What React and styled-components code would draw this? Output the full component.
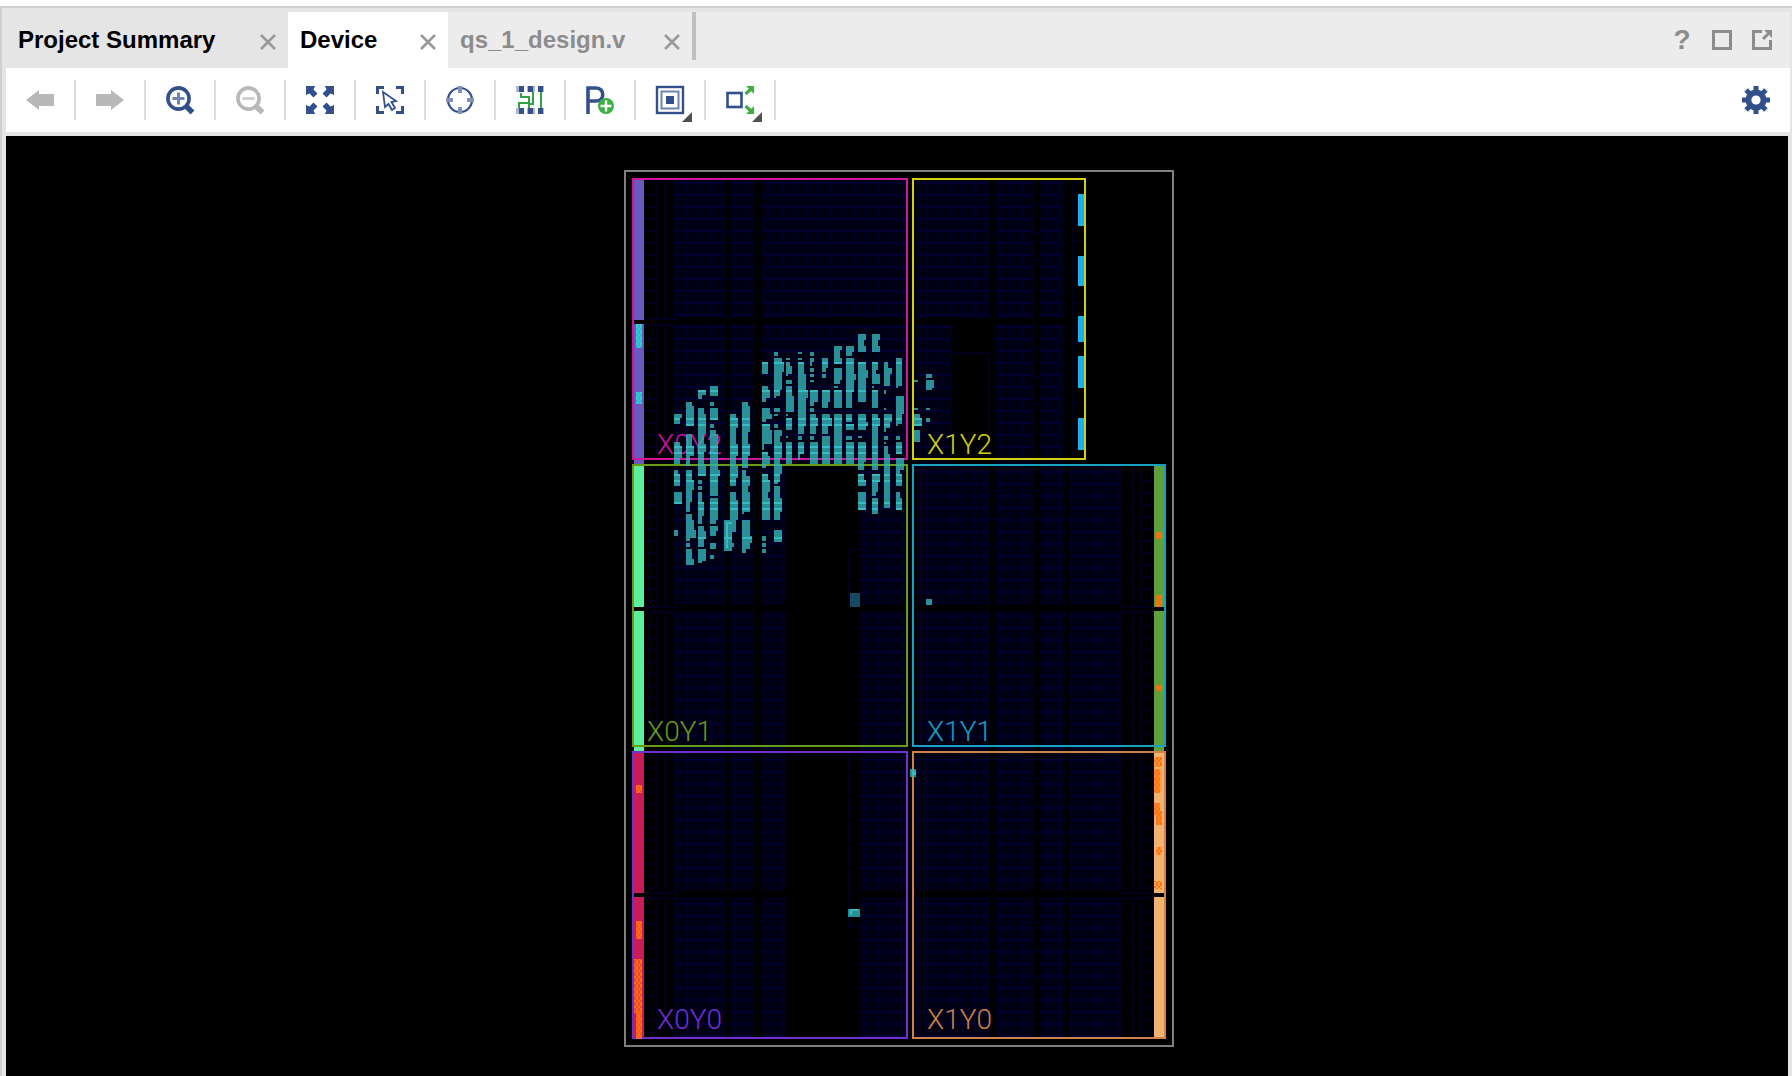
import React from 'react';
import styled, { createGlobalStyle } from 'styled-components';

const GlobalStyle = createGlobalStyle`
  * { box-sizing: border-box; }
  body { margin: 0; background: #fff; font-family: "Liberation Sans", Arial, sans-serif; }
  button { margin: 0; padding: 0; border: 0; background: none; font: inherit; color: inherit; }
`;

const navy = '#33508a';
const green = '#3cb043';
const gray = '#b8b8b8';

/* ---------- window chrome ---------- */

const Page = styled.div`
  display: flex;
  flex-direction: column;
  min-height: 100vh;
  padding-top: 6px;
`;

const Frame = styled.main`
  flex: 1;
  display: flex;
  flex-direction: column;
  padding: 4px 2px 0 4px;
  border-top: 2px solid #cfcfcf;
  border-left: 2px solid #cfcfcf;
  background: #e5e5e5;
`;

const TabBar = styled.header`
  display: flex;
  height: 56px;
  background: #ececec;
`;

const Tabs = styled.nav`
  display: flex;
`;

const Tab = styled.div`
  display: flex;
  align-items: center;
  justify-content: space-between;
  width: ${(p) => p.$width}px;
  padding: 0 12px;
  background: ${(p) => p.$bg};
  color: ${(p) => p.$color};
`;

const TabLabel = styled.button`
  font-size: 24px;
  font-weight: bold;
  line-height: 28px;
  white-space: nowrap;
`;

const CloseButton = styled.button`
  display: flex;
  padding-top: 4px;
`;

const TabDivider = styled.div`
  width: 4px;
  height: 48px;
  background: #c0c0c0;
`;

const WindowActions = styled.div`
  display: flex;
  align-items: center;
  gap: 20px;
  margin-left: auto;
  padding-right: 18px;
`;

const WindowButton = styled.button`
  display: flex;
  justify-content: center;
  align-items: center;
  width: 20px;
  height: 28px;
  font-size: 28px;
  font-weight: bold;
  line-height: 28px;
  color: #8c8c8c;
`;

const Toolbar = styled.div`
  display: flex;
  align-items: center;
  justify-content: space-between;
  height: 68px;
  padding-right: 20px;
  border-bottom: 4px solid #e5e5e5;
  background: #fff;
`;

const ToolGroup = styled.div`
  display: flex;
`;

const Tool = styled.button`
  display: flex;
  align-items: center;
  width: 70px;
  height: 40px;
  padding-left: 20px;
  border-right: 2px solid #dcdcdc;
`;

const SettingsButton = styled.button`
  display: flex;
`;

const Icon = styled.svg`
  display: block;
  width: 28px;
  height: 28px;
  overflow: visible;
`;

const SmallIcon = styled.svg`
  display: block;
  width: ${(p) => p.$size}px;
  height: ${(p) => p.$size}px;
`;

const Canvas = styled.section`
  flex: 1;
  display: flex;
  justify-content: center;
  align-items: flex-start;
  padding: 34px 0 29px 4px;
  border-right: 2px solid #e5e5e5;
  background: #000;
`;

const DeviceMap = styled.svg`
  display: block;
  width: 550px;
  height: 877px;
`;

const RegionLabel = styled.text`
  font-family: Roboto, "Liberation Sans", sans-serif;
  font-size: 28px;
  font-weight: 300;
`;

/* ---------- icons ---------- */

const Close = () => (
  <SmallIcon $size={16} viewBox="0 0 16 16">
    <path d="M1 1 15 15M15 1 1 15" stroke="#999" strokeWidth="2.6" />
  </SmallIcon>
);

const Magnifier = ({ color, light, plus }) => (
  <Icon viewBox="0 0 28 28">
    <circle cx="12.5" cy="12.5" r="10.6" fill="none" stroke={color} strokeWidth="3.6" />
    <path d="M20.5 20.5 26.5 26.5" stroke={color} strokeWidth="5.4" />
    <path d={plus ? 'M6.5 12.5h12M12.5 6.5v12' : 'M6.5 12.5h12'} stroke={light} strokeWidth="3" />
  </Icon>
);

const Menu = () => <path d="M36 26V36H26Z" fill="#505050" />;

const corner = 'M0 0H9L7.500 3.500 11.500 7.500 7.500 11.500 3.500 7.500 0 9Z';

const tools = [
  ['Back', <Icon viewBox="0 0 28 28"><path d="M0 14 13 4V8H28V20H13V24Z" fill={gray} /></Icon>],
  ['Forward', <Icon viewBox="0 0 28 28"><path d="M28 14 15 4V8H0V20H15V24Z" fill={gray} /></Icon>],
  ['Zoom in', <Magnifier color={navy} light="#6f84af" plus />],
  ['Zoom out', <Magnifier color={gray} light="#cfcfcf" />],
  ['Zoom fit', (
    <Icon viewBox="0 0 28 28" fill={navy}>
      {[0, 90, 180, 270].map((a) => <path key={a} d={corner} transform={`rotate(${a} 14 14)`} />)}
    </Icon>
  )],
  ['Select area', (
    <Icon viewBox="0 0 28 28" fill="none" stroke={navy}>
      <path d="M1.500 8V1.500H8M20 1.500H26.500V8M26.500 20V26.500H20M8 26.500H1.500V20" strokeWidth="3" />
      <path d="M7 6 20 15 15.500 16 19 22 16 24 12.500 18 9 21Z" strokeWidth="1.800" />
    </Icon>
  )],
  ['Autofit selection', (
    <Icon viewBox="0 0 28 28" fill="none">
      <circle cx="14" cy="14" r="12" stroke={navy} strokeWidth="2.200" />
      <path d="M14 0V7M14 21V28M0 14H7M21 14H28" stroke="#8293b9" strokeWidth="4" />
    </Icon>
  )],
  ['Routing resources', (
    <Icon viewBox="0 0 28 28" fill="none">
      <path d="M5 7V11H13V17H3V22M17 6V18H13V22M25 6V22" stroke="#2fa345" strokeWidth="2" />
      {[0, 22].map((y) => (
        <React.Fragment key={y}>
          <path d={`M0 ${y + 3}H28`} stroke="#aab6d0" strokeWidth="6" strokeDasharray="8 3" />
          <path d={`M3 ${y + 3}H8M12 ${y + 3}H17M22 ${y + 3}H27`} stroke={navy} strokeWidth="6" />
        </React.Fragment>
      ))}
    </Icon>
  )],
  ['Draw pblock', (
    <Icon viewBox="0 0 28 28" fill="none">
      <path d="M2 28V2H10C19 2 19 15 10 15H2" stroke={navy} strokeWidth="3.600" />
      <circle cx="20" cy="20" r="8" fill={green} />
      <path d="M20 14.500V25.500M14.500 20H25.500" stroke="#fff" strokeWidth="2.400" />
    </Icon>
  )],
  ['Cell drag mode', (
    <Icon viewBox="0 0 28 28" fill="none">
      <rect x="1" y="1" width="26" height="26" stroke={navy} strokeWidth="2.400" />
      <rect x="5.500" y="5.500" width="17" height="17" stroke="#6f84af" strokeWidth="2" />
      <rect x="10" y="10" width="8" height="8" fill={navy} />
      <Menu />
    </Icon>
  )],
  ['Show connections', (
    <Icon viewBox="0 0 28 28" fill="none">
      <rect x="1.500" y="7" width="14" height="14" stroke={navy} strokeWidth="2.600" />
      <path d="M19.500 8 25 3M19.500 20 25 25" stroke={green} strokeWidth="3.200" />
      <path d="M20 0H28V8ZM20 28H28V20Z" fill={green} />
      <Menu />
    </Icon>
  )],
];

const Gear = () => (
  <Icon viewBox="0 0 28 28">
    {[0, 45, 90, 135].map((a) => (
      <rect key={a} x="11.500" y="0" width="5" height="28" fill={navy} transform={`rotate(${a} 14 14)`} />
    ))}
    <circle cx="14" cy="14" r="10.500" fill={navy} />
    <circle cx="14" cy="14" r="4.600" fill="#fff" />
  </Icon>
);

/* ---------- device floorplan data ---------- */

// Logic columns: x, y, width, height, first row line
const blocks = [];
const addBlocks = (spans, y, h, first) => spans.forEach(([x, w]) => blocks.push([x, y, w, h, first]));
const left = [[674, 52], [730, 24], [762, 144]];
const leftSplit = [[674, 52], [730, 24], [762, 24], [860, 46]];
const rightTop = [[916, 74], [996, 38], [1040, 24]];
const right = [[916, 74], [996, 38], [1040, 26], [1070, 52]];
addBlocks(left, 180, 138, 182);
addBlocks(left, 324, 140, 326);
addBlocks(rightTop, 180, 138, 182);
addBlocks([[916, 36], [996, 38], [1040, 24]], 324, 140, 326);
addBlocks(leftSplit, 466, 138, 471);
addBlocks(leftSplit, 611, 140, 615);
addBlocks(right, 466, 138, 471);
addBlocks(right, 611, 140, 615);
addBlocks(leftSplit, 753, 138, 759);
addBlocks(leftSplit, 897, 140, 903);
addBlocks(right, 753, 138, 759);
addBlocks(right, 897, 140, 903);

const halves = [[180, 318], [324, 458], [466, 606], [611, 745], [753, 892], [897, 1037]];

const strips = [
  [634, 180, 10, 140, '#6c58bc'], [634, 324, 10, 140, '#6c58bc'],
  [634, 466, 10, 141, '#5cf09c'], [634, 611, 10, 140, '#5cf09c'],
  [634, 753, 10, 140, '#c81c58'], [634, 897, 10, 140, '#c81c58'],
  [1154, 466, 10, 141, '#60a038'], [1154, 611, 10, 140, '#60a038'],
  [1154, 753, 10, 140, '#f0b470'], [1154, 897, 10, 140, '#f0b470'],
  [1078, 194, 6, 32, '#18b0f0'], [1078, 256, 6, 30, '#18b0f0'], [1078, 316, 6, 26, '#18b0f0'],
  [1078, 356, 6, 32, '#18b0f0'], [1078, 418, 6, 32, '#18b0f0'],
];

const regions = [
  ['X0Y2', 633, 179, 274, 280, '#d0149e', 657, 454],
  ['X1Y2', 913, 179, 172, 280, '#d4d010', 927, 454],
  ['X0Y1', 633, 465, 274, 281, '#689c14', 647, 741],
  ['X1Y1', 913, 465, 252, 281, '#18a0c0', 927, 741],
  ['X0Y0', 633, 752, 274, 286, '#7030d0', 657, 1029],
  ['X1Y0', 913, 752, 252, 286, '#d08048', 927, 1029],
];

// Placed cells by column: x -> [y, height, width]
const placed = {
  674: [[414, 4, 8], [418, 6, 6], [442, 4, 6], [446, 12, 8], [458, 6, 6], [470, 4, 4], [474, 12, 6], [492, 12, 8], [530, 6, 4]],
  686: [[402, 4, 6], [406, 20, 8], [434, 12, 6], [446, 10, 8], [456, 10, 4], [470, 10, 6], [480, 10, 8], [490, 12, 6], [502, 10, 4], [514, 6, 6], [520, 10, 8], [530, 8, 10], [538, 3, 4], [543, 4, 4], [549, 10, 6], [559, 6, 8]],
  698: [[390, 5, 8], [395, 4, 4], [408, 6, 6], [414, 10, 8], [424, 10, 8], [434, 10, 6], [444, 8, 8], [452, 12, 6], [464, 12, 8], [480, 4, 4], [486, 4, 4], [492, 10, 4], [502, 14, 6], [516, 8, 4], [526, 5, 6], [531, 8, 8], [539, 8, 6], [549, 12, 8], [561, 2, 4]],
  710: [[386, 10, 8], [402, 4, 4], [408, 12, 8], [424, 4, 4], [430, 4, 6], [434, 36, 8], [470, 6, 10], [476, 20, 8], [498, 22, 8], [520, 4, 6], [526, 5, 8], [531, 5, 6], [543, 6, 6], [555, 4, 4]],
  724: [[520, 31, 8]],
  730: [[414, 4, 6], [418, 10, 8], [428, 16, 6], [444, 12, 8], [456, 10, 6], [466, 12, 8], [478, 8, 6], [492, 8, 6], [500, 20, 8], [520, 12, 6], [543, 4, 4]],
  742: [[402, 4, 6], [406, 26, 8], [432, 12, 6], [444, 12, 8], [456, 12, 6], [470, 6, 4], [476, 10, 8], [486, 6, 6], [492, 20, 8], [512, 2, 2], [520, 16, 8], [536, 7, 10], [543, 6, 8], [549, 4, 4]],
  762: [[362, 12, 6], [386, 4, 6], [390, 8, 8], [398, 4, 4], [408, 6, 8], [414, 5, 10], [419, 3, 4], [424, 6, 8], [430, 14, 10], [444, 6, 2], [452, 4, 6], [456, 8, 8], [464, 4, 4], [474, 6, 6], [480, 12, 8], [492, 6, 6], [498, 22, 8], [536, 5, 4], [543, 4, 4], [549, 4, 4]],
  774: [[352, 4, 4], [358, 4, 8], [362, 10, 10], [372, 18, 8], [390, 6, 6], [396, 2, 2], [408, 4, 6], [414, 2, 4], [424, 4, 4], [430, 6, 8], [436, 6, 6], [442, 16, 8], [458, 6, 6], [464, 10, 8], [474, 8, 6], [482, 2, 4], [486, 12, 6], [498, 14, 8], [512, 8, 6], [530, 12, 8]],
  786: [[358, 2, 4], [362, 4, 4], [366, 8, 6], [374, 2, 2], [380, 4, 6], [386, 10, 6], [396, 16, 8], [414, 2, 2], [418, 12, 6], [436, 2, 2], [442, 22, 6]],
  798: [[352, 2, 4], [358, 2, 4], [362, 12, 6], [374, 16, 8], [390, 8, 10], [398, 28, 8], [426, 8, 6], [436, 4, 4], [442, 12, 6], [454, 6, 2]],
  810: [[352, 4, 4], [358, 4, 4], [362, 4, 2], [368, 4, 4], [374, 3, 4], [380, 2, 4], [390, 12, 8], [402, 4, 4], [408, 4, 4], [414, 4, 6], [418, 8, 8], [426, 8, 6], [436, 4, 4], [442, 22, 8]],
  822: [[358, 10, 6], [368, 4, 4], [374, 4, 4], [390, 12, 8], [402, 6, 6], [414, 4, 8], [418, 8, 10], [426, 8, 6], [436, 28, 8]],
  834: [[346, 4, 8], [350, 8, 6], [358, 6, 8], [368, 12, 8], [380, 4, 6], [386, 2, 4], [390, 18, 8], [414, 50, 8]],
  846: [[346, 6, 8], [352, 4, 6], [358, 16, 8], [374, 6, 10], [380, 12, 8], [392, 16, 6], [414, 8, 6], [424, 6, 8], [436, 4, 6], [442, 22, 8]],
  858: [[334, 6, 8], [340, 6, 6], [346, 6, 8], [362, 8, 8], [370, 8, 10], [378, 24, 8], [414, 8, 8], [422, 4, 10], [426, 4, 8], [436, 2, 4], [442, 20, 8], [462, 8, 6], [474, 6, 6], [480, 6, 8], [492, 8, 8], [500, 10, 8]],
  872: [[334, 6, 8], [340, 6, 6], [346, 6, 8], [362, 8, 6], [370, 4, 4], [374, 10, 8], [386, 2, 2], [390, 18, 6], [414, 4, 6], [418, 8, 8], [426, 26, 6], [452, 18, 6], [474, 8, 8], [482, 10, 6], [492, 4, 4], [498, 16, 6]],
  884: [[362, 6, 4], [368, 6, 8], [374, 12, 6], [390, 4, 2], [408, 2, 2], [414, 8, 8], [422, 6, 6], [428, 4, 2], [436, 4, 4], [442, 2, 2], [446, 8, 4], [454, 54, 6]],
  896: [[358, 28, 6], [386, 2, 2], [396, 18, 8], [414, 10, 6], [424, 2, 2], [436, 4, 4], [442, 12, 6], [458, 12, 8], [470, 4, 4], [474, 12, 6], [492, 6, 4], [498, 12, 6]],
  914: [[380, 2, 4], [408, 2, 4], [414, 4, 6], [418, 8, 8], [430, 12, 6]],
  926: [[374, 4, 6], [380, 8, 8], [388, 2, 6], [408, 2, 4], [418, 4, 4], [599, 6, 6]],
  848: [[909, 8, 12]],
  910: [[769, 8, 6]],
};
const brightRows = [362, 390, 418, 424, 446, 452, 474, 480, 502, 508, 537];

const cells = [];
const glints = [];
Object.entries(placed).forEach(([x, list]) => list.forEach(([y, h, w]) => {
  cells.push([Number(x), y, w, h]);
  brightRows.forEach((row) => {
    if (w >= 6 && row >= y && row + 2 <= y + h) glints.push([Number(x), row, w, 2]);
  });
}));
glints.push([726, 522, 6, 2], [726, 522, 2, 26], [850, 909, 8, 2], [850, 909, 2, 6], [912, 771, 4, 4]);

// Used pads: x, y, width, height, halo, core
const pads = [
  [636, 324, 6, 24, '#34b4d4', '#2ccfd0'], [636, 392, 6, 12, '#34b4d4', '#2ccfd0'],
  [636, 785, 6, 8, '#ee5430', '#ff6c10'], [636, 921, 6, 18, '#ff6c10', '#f05c24'],
  [634, 959, 8, 54, '#e84c34', '#ff6c10'], [636, 1011, 6, 28, '#ff6c10', '#f05c24'],
  [1156, 532, 6, 7, '#d07c20', '#ff7010'], [1156, 595, 6, 12, '#d07c20', '#ff7010'],
  [1156, 685, 6, 6, '#d07c20', '#ff7010'],
  [1154, 757, 8, 10, '#ff9438', '#ff7410'], [1154, 769, 6, 24, '#ff8424', '#ff7410'],
  [1160, 769, 2, 22, '#f8a050', '#f8a050'], [1154, 803, 6, 12, '#ff8424', '#ff7410'],
  [1156, 811, 6, 14, '#ff8424', '#ff7410'], [1156, 847, 6, 8, '#ff7410', '#ff9438'],
  [1154, 881, 8, 8, '#f8a050', '#ff7410'],
];

const Rects = ({ items, ...rest }) => (
  <g {...rest}>
    {items.map(([x, y, w, h, fill], i) => <rect key={i} x={x} y={y} width={w} height={h} fill={fill} />)}
  </g>
);

const ladder = (x, w, y0, y1) => {
  const out = [];
  for (let y = y0 + 14; y < y1 - 4; y += 12) out.push([x, y, w, 2]);
  return out;
};

const edges = [];
halves.forEach(([a, b], i) => {
  edges.push([645, a, 1, b - a], [656, a, 2, b - a], [664, a, 2, b - a], ...ladder(646, 10, a, b));
  edges.push([644, i % 2 ? a : b, 34, 2], [755, a, 1, b - a]);
  if (i > 1) {
    edges.push([1132, a, 2, b - a], [1140, a, 2, b - a], [1152, a, 1, b - a], ...ladder(1142, 10, a, b));
    edges.push([1120, i % 2 ? a : b, 34, 2]);
  } else {
    edges.push([1072, a, 2, b - a]);
  }
  [204, 232, 260].forEach((o, k) => {
    const y = a + 24 + k * 28 + (o % 2);
    edges.push([726, y, 4, 2], [758, y, 4, 2], [1034, y, 6, 2]);
    if (i !== 1) edges.push([990, y, 6, 2]);
    if (i > 1) edges.push([1066, y, 4, 2]);
  });
});
edges.push([953, 352, 37, 2], [988, 352, 2, 106]);
edges.push([848, 549, 12, 2], [848, 549, 2, 57], [848, 753, 2, 173], [848, 925, 12, 2], [848, 807, 12, 2]);
edges.push([1074, 240, 10, 2], [1074, 302, 10, 2], [1074, 342, 10, 2], [1074, 402, 10, 2]);

const Device = () => (
  <DeviceMap viewBox="624 170 550 877" role="img" aria-label="Device floorplan" shapeRendering="crispEdges">
    <defs>
      {[182, 326, 471, 615, 759, 903].map((y) => (
        <pattern key={y} id={`rows${y}`} x="676" y={y} width="12" height="12" patternUnits="userSpaceOnUse">
          <rect width="12" height="12" fill="#000014" />
          <rect x="10" width="2" height="12" fill="#00001f" />
          <rect x="4" y="4" width="4" height="6" fill="#000010" />
          <rect width="12" height="2" fill="#000030" />
        </pattern>
      ))}
      {pads.map(([, , , , halo, core], i) => (
        <pattern key={i} id={`pad${i}`} width="4" height="6" patternUnits="userSpaceOnUse">
          <rect width="4" height="6" fill={halo} />
          <rect width="2" height="4" fill={core} />
          <rect x="2" y="4" width="2" height="2" fill={core} />
        </pattern>
      ))}
    </defs>
    <rect x="625" y="171" width="548" height="875" fill="none" stroke="#808080" strokeWidth="2" />
    {blocks.map(([x, y, w, h, first], i) => (
      <rect key={i} x={x} y={y} width={w} height={h} fill={`url(#rows${first})`} />
    ))}
    <Rects items={edges} fill="#00001e" />
    <Rects items={strips} />
    <rect x="850" y="593" width="10" height="14" fill="#144a62" />
    {regions.map(([name, x, y, w, h, color, tx, ty]) => (
      <g key={name}>
        <rect x={x} y={y} width={w} height={h} fill="none" stroke={color} strokeWidth="2" />
        <RegionLabel x={tx} y={ty} fill={color}>{name}</RegionLabel>
      </g>
    ))}
    <Rects items={cells} fill="#34b4b8" opacity="0.8" />
    <Rects items={glints} fill="#34bcc0" />
    {pads.map(([x, y, w, h], i) => (
      <rect key={i} x={x} y={y} width={w} height={h} fill={`url(#pad${i})`} />
    ))}
  </DeviceMap>
);

const tabs = [
  { name: 'Project Summary', width: 282, bg: '#e5e5e5', color: '#000' },
  { name: 'Device', width: 160, bg: '#fff', color: '#000' },
  { name: 'qs_1_design.v', width: 244, bg: '#ececec', color: '#8c8c8c' },
];

export default function App() {
  return (
    <Page>
      <GlobalStyle />
      <Frame>
        <TabBar>
          <Tabs>
            {tabs.map((t) => (
              <Tab key={t.name} $width={t.width} $bg={t.bg} $color={t.color}>
                <TabLabel>{t.name}</TabLabel>
                <CloseButton aria-label={`Close ${t.name}`}><Close /></CloseButton>
              </Tab>
            ))}
            <TabDivider />
          </Tabs>
          <WindowActions>
            <WindowButton>?</WindowButton>
            <WindowButton aria-label="Maximize">
              <SmallIcon $size={20} viewBox="0 0 20 20">
                <rect x="1.500" y="1.500" width="17" height="17" fill="none" stroke="#8c8c8c" strokeWidth="3" />
              </SmallIcon>
            </WindowButton>
            <WindowButton aria-label="Float">
              <SmallIcon $size={20} viewBox="0 0 20 20" fill="none" stroke="#8c8c8c">
                <path d="M10 1.500H1.500V18.500H18.500V10" strokeWidth="3" />
                <path d="M11 9 16 4" strokeWidth="3" />
                <path d="M12 0H20V8Z" fill="#8c8c8c" stroke="none" />
              </SmallIcon>
            </WindowButton>
          </WindowActions>
        </TabBar>
        <Toolbar>
          <ToolGroup>
            {tools.map(([name, icon]) => <Tool key={name} aria-label={name}>{icon}</Tool>)}
          </ToolGroup>
          <SettingsButton aria-label="Settings"><Gear /></SettingsButton>
        </Toolbar>
        <Canvas>
          <Device />
        </Canvas>
      </Frame>
    </Page>
  );
}
